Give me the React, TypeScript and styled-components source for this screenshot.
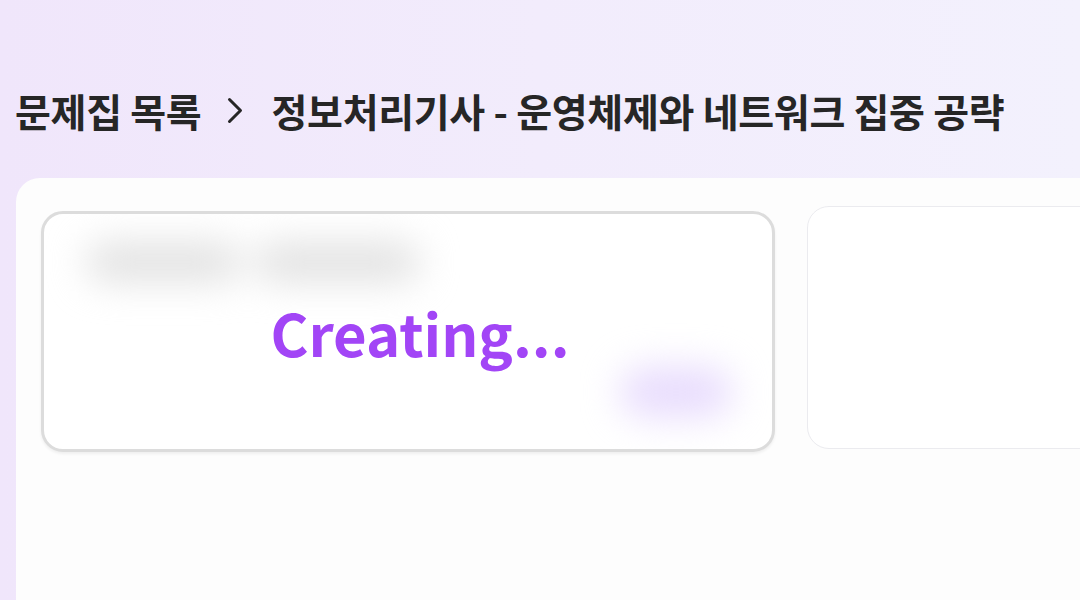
import React from "react";
import styled, { createGlobalStyle } from "styled-components";

const GlobalStyle = createGlobalStyle`
  html, body {
    margin: 0;
    padding: 0;
    height: 100%;
  }
  body {
    font-family: "Noto Sans CJK KR", "Noto Sans", sans-serif;
    background: linear-gradient(90deg, #f0e6fb 0%, #f2ecfc 50%, #f3f1fd 100%);
    overflow: hidden;
  }
  #root {
    height: 100%;
  }
`;

const Page = styled.div`
  width: 1080px;
  height: 600px;
  display: flex;
  flex-direction: column;
`;

const Header = styled.header`
  height: 178px;
  box-sizing: border-box;
  padding: 42px 0 0 15px;
  display: flex;
  align-items: center;
`;

const Crumb = styled.span`
  font-size: 39px;
  font-weight: 700;
  color: #262626;
  line-height: 1.2;
  letter-spacing: -0.3px;
  white-space: nowrap;
`;

const Separator = styled.span`
  display: inline-flex;
  margin: 0 27px 0 26px;
  color: #262626;
`;

const Panel = styled.main`
  flex: 1;
  margin-left: 16px;
  background: #fdfdfd;
  border-radius: 24px 0 0 0;
  padding: 28px 0 0 25px;
  display: flex;
  align-items: flex-start;
  gap: 32px;
  overflow: hidden;
`;

const Card = styled.div<{ $active?: boolean }>`
  position: relative;
  flex: none;
  box-sizing: border-box;
  border-radius: 22px;
  background: #ffffff;
  overflow: hidden;
  ${({ $active }) =>
    $active
      ? `
    width: 734px;
    height: 241px;
    margin-top: 5px;
    border: 3px solid #dcdcdc;
    box-shadow: 0 2px 3px rgba(0, 0, 0, 0.06);
  `
      : `
    width: 400px;
    height: 243px;
    border: 1.5px solid #ebebef;
  `}
`;

const BlurLayer = styled.div`
  height: 100%;
  box-sizing: border-box;
  padding: 28px 36px 32px 42px;
  display: flex;
  flex-direction: column;
  justify-content: space-between;
  filter: blur(18px);
`;

const SkeletonRow = styled.div`
  display: flex;
  gap: 14px;
`;

const SkeletonBar = styled.div<{ $w: number }>`
  width: ${({ $w }) => $w}px;
  height: 40px;
  border-radius: 20px;
  background: #e2e2e2;
`;

const Pill = styled.div`
  align-self: flex-end;
  width: 112px;
  height: 50px;
  margin-right: 4px;
  border-radius: 25px;
  background: #e8dcfd;
`;

const Status = styled.div`
  position: absolute;
  inset: 0;
  display: flex;
  align-items: center;
  justify-content: center;
  padding: 0 0 0 24px;
  font-size: 58px;
  font-weight: 700;
  color: #a245f6;
`;

const Chevron = () => (
  <svg width="17" height="27" viewBox="0 0 17 27" fill="none">
    <polyline
      points="2.5,2.5 13.5,13.5 2.5,24.5"
      stroke="currentColor"
      strokeWidth="3"
      strokeLinecap="round"
      strokeLinejoin="round"
    />
  </svg>
);

export default function App() {
  return (
    <Page>
      <GlobalStyle />
      <Header>
        <Crumb>문제집 목록</Crumb>
        <Separator>
          <Chevron />
        </Separator>
        <Crumb>정보처리기사 - 운영체제와 네트워크 집중 공략</Crumb>
      </Header>
      <Panel>
        <Card $active>
          <BlurLayer>
            <SkeletonRow>
              <SkeletonBar $w={155} />
              <SkeletonBar $w={165} />
            </SkeletonRow>
            <Pill />
          </BlurLayer>
          <Status>Creating...</Status>
        </Card>
        <Card />
      </Panel>
    </Page>
  );
}
